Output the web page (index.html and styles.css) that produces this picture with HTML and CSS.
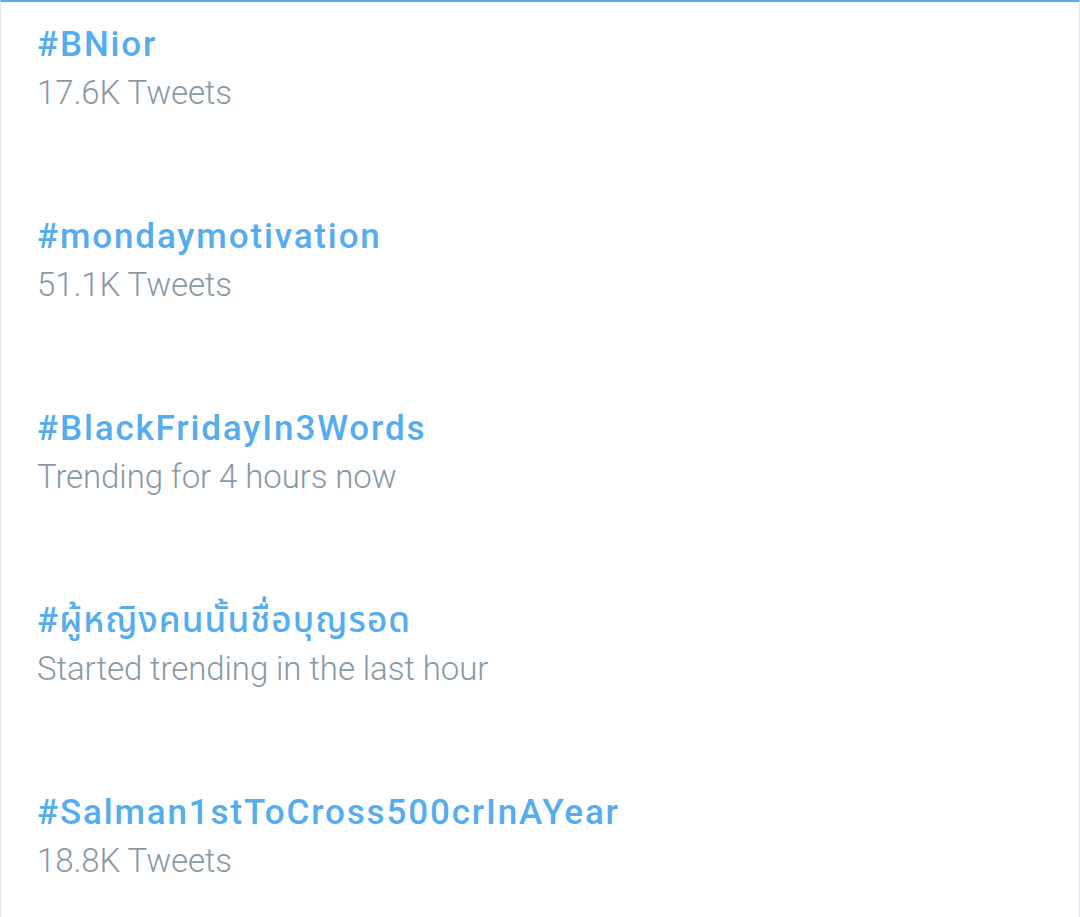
FILE: index.html
```html
<!DOCTYPE html>
<html>
<head>
<meta charset="utf-8">
<link rel="stylesheet" href="styles.css">
</head>
<body>
<div class="trends">
  <div class="trend">
    <div class="tag">#BNior</div>
    <div class="meta">17.6K Tweets</div>
  </div>
  <div class="trend">
    <div class="tag">#mondaymotivation</div>
    <div class="meta">51.1K Tweets</div>
  </div>
  <div class="trend">
    <div class="tag">#BlackFridayIn3Words</div>
    <div class="meta">Trending for 4 hours now</div>
  </div>
  <div class="trend">
    <div class="tag tag-thai">#ผู้หญิงคนนั้นชื่อบุญรอด</div>
    <div class="meta">Started trending in the last hour</div>
  </div>
  <div class="trend">
    <div class="tag">#Salman1stToCross500crInAYear</div>
    <div class="meta">18.8K Tweets</div>
  </div>
</div>
</body>
</html>
```
FILE: styles.css
```css
html, body {
  margin: 0;
  padding: 0;
  background: #ffffff;
}
.trends {
  box-sizing: border-box;
  width: 1080px;
  height: 917px;
  border-top: 2px solid #55acee;
  border-left: 1px solid #e1e8ed;
  border-right: 1px solid #e1e8ed;
  padding: 21px 0 0 36px;
  display: flex;
  flex-direction: column;
  overflow: hidden;
  font-family: Roboto, "Noto Sans Thai", "Noto Sans", sans-serif;
}
.trend {
  height: 192px;
  flex: none;
}
.tag {
  font-size: 35px;
  line-height: 44px;
  font-weight: 500;
  letter-spacing: 1.85px;
  color: #55acee;
  white-space: nowrap;
}
.tag-thai {
  letter-spacing: 1.1px;
}
.meta {
  margin-top: 4px;
  font-size: 33px;
  line-height: 44px;
  font-weight: 300;
  letter-spacing: -0.1px;
  color: #8899a6;
  white-space: nowrap;
}
```
